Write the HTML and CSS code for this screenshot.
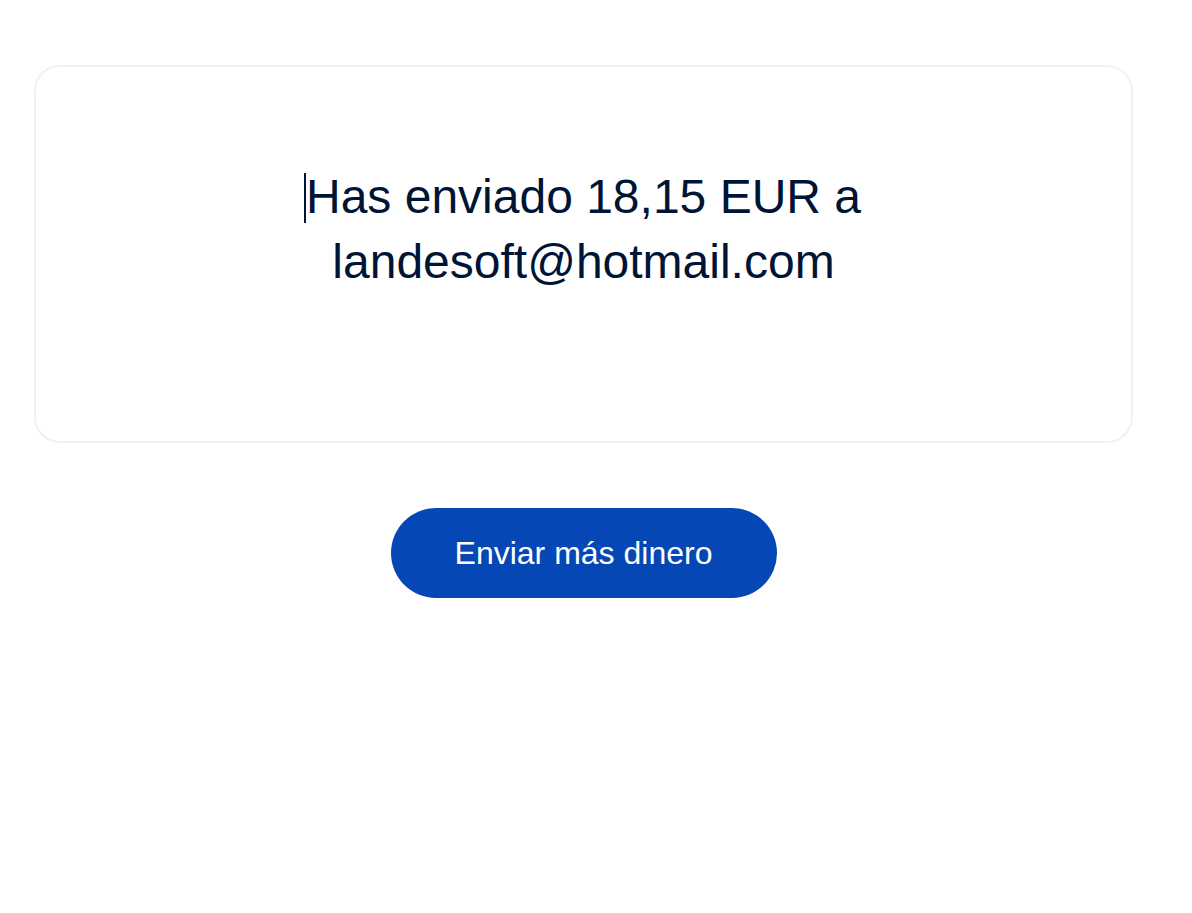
FILE: index.html
```html
<!DOCTYPE html>
<html lang="es">
<head>
    <meta charset="UTF-8">
    <meta name="viewport" content="width=device-width, initial-scale=1.0">
    <title>Dinero enviado</title>
    <link rel="stylesheet" href="styles.css">
</head>
<body>
    <div class="page">
        <div class="card">
            <h1 class="message"><span class="caret"></span>Has enviado 18,15 EUR a<br>landesoft@hotmail.com</h1>
        </div>
        <div class="actions">
            <a href="#" class="btn">Enviar más dinero</a>
        </div>
    </div>
</body>
</html>
```

FILE: styles.css
```css
body {
    margin: 0;
    padding: 0;
    background: #ffffff;
    font-family: 'Liberation Sans', Arial, sans-serif;
    color: #001435;
}
.page {
    width: 1099px;
    margin-left: 34px;
    padding-top: 65px;
}
.card {
    box-sizing: border-box;
    height: 378px;
    border: 2px solid #f1f1f1;
    border-radius: 26px;
    padding-top: 97px;
}
.message {
    margin: 0;
    font-size: 48px;
    font-weight: normal;
    line-height: 65px;
    text-align: center;
}
.caret {
    display: inline-block;
    width: 0;
    height: 50px;
    border-left: 2px solid #001435;
    vertical-align: -10px;
    margin-left: -2px;
}
.actions {
    display: flex;
    justify-content: center;
    padding-top: 65px;
}
.btn {
    display: inline-flex;
    align-items: center;
    justify-content: center;
    width: 386px;
    height: 90px;
    background: #0547b4;
    color: #ffffff;
    border-radius: 45px;
    text-decoration: none;
    font-size: 32px;
}
```
